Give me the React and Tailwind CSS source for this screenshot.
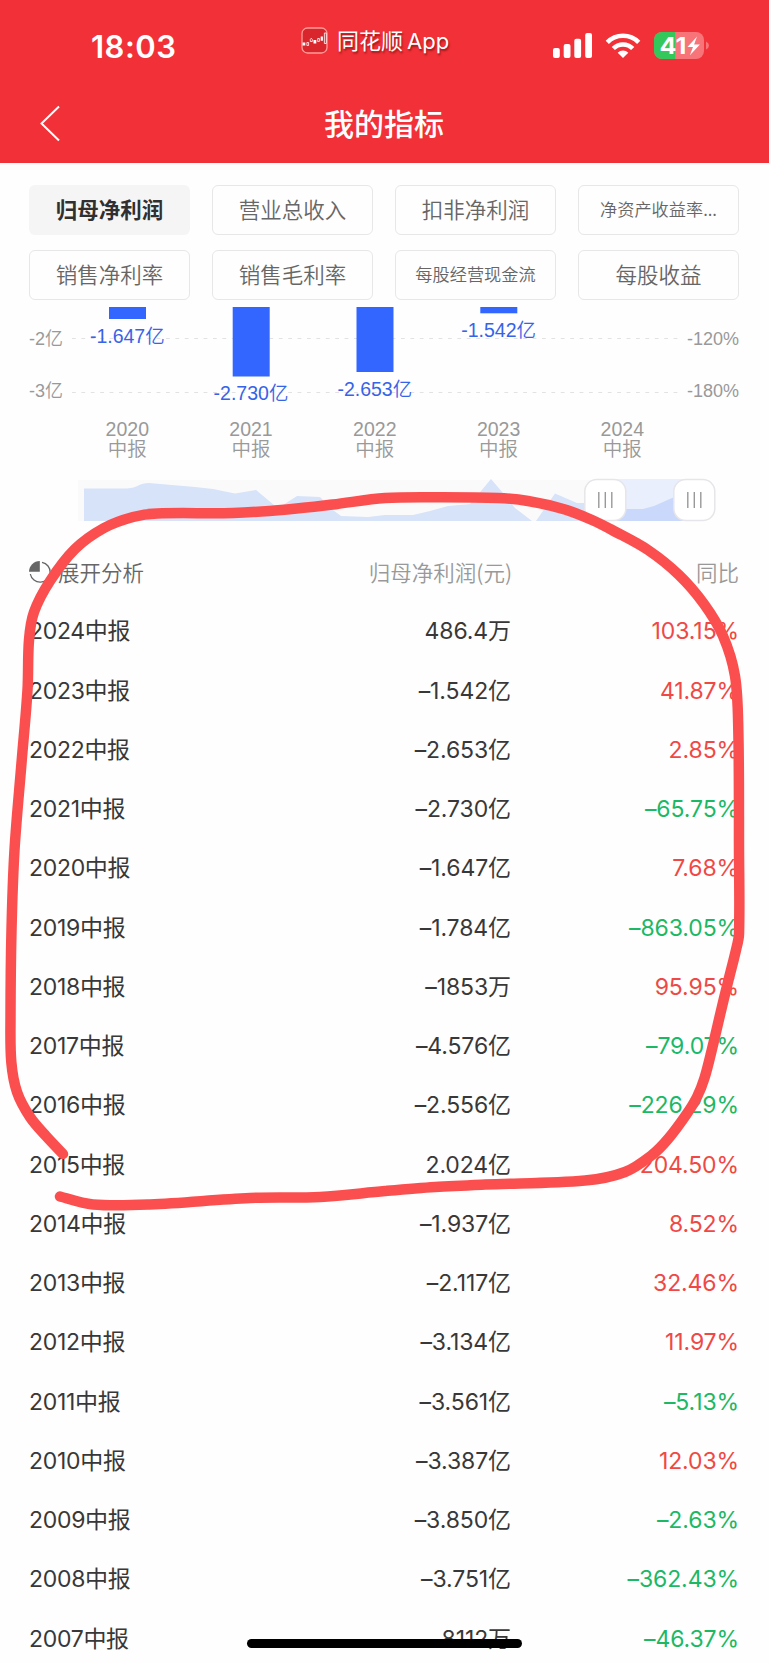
import React from "react";

const INDICATORS = [
  { label: "归母净利润", active: true },
  { label: "营业总收入" },
  { label: "扣非净利润" },
  { label: "净资产收益率...", small: true },
  { label: "销售净利率" },
  { label: "销售毛利率" },
  { label: "每股经营现金流", small: true },
  { label: "每股收益" },
];

const BARS = [
  { x: 109, bottom: 319, year: "2020", value: "-1.647亿", labelY: 342.5 },
  { x: 232.7, bottom: 376.5, year: "2021", value: "-2.730亿", labelY: 400 },
  { x: 356.5, bottom: 372, year: "2022", value: "-2.653亿", labelY: 396 },
  { x: 480.3, bottom: 313.3, year: "2023", value: "-1.542亿", labelY: 337 },
  { x: 604, year: "2024" },
];

const ROWS = [
  ["2024中报", "486.4万", "103.15%"],
  ["2023中报", "–1.542亿", "41.87%"],
  ["2022中报", "–2.653亿", "2.85%"],
  ["2021中报", "–2.730亿", "–65.75%"],
  ["2020中报", "–1.647亿", "7.68%"],
  ["2019中报", "–1.784亿", "–863.05%"],
  ["2018中报", "–1853万", "95.95%"],
  ["2017中报", "–4.576亿", "–79.07%"],
  ["2016中报", "–2.556亿", "–226.29%"],
  ["2015中报", "2.024亿", "204.50%"],
  ["2014中报", "–1.937亿", "8.52%"],
  ["2013中报", "–2.117亿", "32.46%"],
  ["2012中报", "–3.134亿", "11.97%"],
  ["2011中报", "–3.561亿", "–5.13%"],
  ["2010中报", "–3.387亿", "12.03%"],
  ["2009中报", "–3.850亿", "–2.63%"],
  ["2008中报", "–3.751亿", "–362.43%"],
  ["2007中报", "8112万", "–46.37%"],
];

const MARKER = [
  [63, 1154], [46, 1136], [30, 1117], [17, 1092], [11.3, 1062], [10.5, 1018],
  [11.5, 930], [14.5, 850], [21.5, 763], [27.5, 690], [29, 640], [34, 612],
  [50, 581], [75, 549], [104, 528], [133, 517], [157, 513.5], [233, 513],
  [287, 509.5], [333, 504.5], [385, 498], [440, 497.2], [498, 498], [528, 501],
  [565, 509.5], [592, 520], [613, 530.5], [648, 550], [679, 575], [704, 604],
  [723, 636], [735, 676], [738.3, 730], [739, 850], [739, 934], [736, 950],
  [728, 982], [720.500, 1013], [712.500, 1047], [704.500, 1078], [697, 1097],
  [686, 1115], [668, 1139], [652, 1155],
  [625, 1172], [585, 1180.5], [485, 1184.5], [435, 1187], [385, 1191],
  [320, 1197], [250, 1198], [150, 1204.5], [93, 1204.5], [60, 1196.5],
];

function smooth(points) {
  let d = `M${points[0][0]} ${points[0][1]}`;
  for (let i = 0; i < points.length - 1; i++) {
    const a = points[i - 1] || points[i];
    const b = points[i];
    const c = points[i + 1];
    const e = points[i + 2] || c;
    const len = Math.hypot(c[0] - b[0], c[1] - b[1]);
    const before = Math.hypot(b[0] - a[0], b[1] - a[1]) || len;
    const after = Math.hypot(e[0] - c[0], e[1] - c[1]) || len;
    const k1 = len / (len + before) / 3;
    const k2 = len / (len + after) / 3;
    d += ` C${b[0] + (c[0] - a[0]) * k1} ${b[1] + (c[1] - a[1]) * k1} ${c[0] - (e[0] - b[0]) * k2} ${c[1] - (e[1] - b[1]) * k2} ${c[0]} ${c[1]}`;
  }
  return d;
}

function AppBadge() {
  return (
    <svg className="size-[27px]" viewBox="0 0 27 27" fill="none">
      <rect x="1" y="1" width="25" height="25" rx="5.5" fill="#d9262c" stroke="#ff9c98" strokeWidth="1.3" />
      <path d="M1.500 15.500h2.800v3H1.500zM12.500 13h2.800v3.600h-2.800zM19.700 9.500h2.200v4.300h-2.200z" fill="#fff" />
      <path d="M5.900 15.500h1.700v3H5.900zM9.300 14.500v-2l1-1.300 1 1.300v2zM16.700 11.500h1.700v3h-1.700zM23.400 6h1.900v10.500h-1.900z" stroke="#fff" strokeWidth=".8" />
    </svg>
  );
}

function StatusBar() {
  return (
    <div className="flex h-[92px] w-full pl-[91px]">
      <div className="mt-[27px] w-[210px] font-[Inter] text-[31px] leading-[40px] font-semibold tracking-[0.5px]">18:03</div>
      <div className="mt-[26px] flex h-[28px] w-[251px] items-center gap-[9px]">
        <AppBadge />
        <span className="text-[22px] leading-[28px] whitespace-nowrap [text-shadow:1px_2px_2px_rgba(90,0,0,0.55)]">
          同花顺<span className="ml-[4px] font-[Inter] text-[22px]">App</span>
        </span>
      </div>
      <svg className="mt-[30px] h-[32px] w-[162px]" viewBox="552 30 162 32" fill="#fff">
        <rect x="553" y="48" width="6.800" height="10" rx="2" />
        <rect x="563.700" y="44" width="6.800" height="14" rx="2" />
        <rect x="574.300" y="38.800" width="6.800" height="19.200" rx="2" />
        <rect x="585.200" y="33" width="6.800" height="25" rx="2" />
        <g fill="none" stroke="#fff" strokeWidth="4.500">
          <path d="M607.300 42.300a22 22 0 0 1 31.400 0" />
          <path d="M613.300 48.500a13.600 13.600 0 0 1 19.400 0" />
        </g>
        <path d="M623 58l-5.300-5.300a7.500 7.500 0 0 1 10.600 0z" />
        <clipPath id="cell"><rect x="654" y="32" width="50" height="27" rx="8" /></clipPath>
        <g clipPath="url(#cell)">
          <rect x="654" y="32" width="50" height="27" fill="#f77478" />
          <rect x="654" y="32" width="21" height="27" fill="#34c759" />
        </g>
        <path d="M706 41.500q3 1.500 3 4t-3 4z" fill="#f77478" />
        <text x="659.500" y="54" fontFamily="Inter" fontSize="23.500" fontWeight="700" textLength="27" lengthAdjust="spacingAndGlyphs">41</text>
        <path d="M697 36.500l-9.500 10.600h5.500l-3.100 8.200 10-10.900h-5.800z" />
      </svg>
    </div>
  );
}

function NavBar() {
  return (
    <div className="flex h-[71px] items-start">
      <svg className="mt-[13px] ml-[38px] h-[38px] w-[24px]" viewBox="0 0 24 38" fill="none" stroke="#fff" strokeWidth="2">
        <path d="M21 1.500 3.500 18.500 21 35.500" />
      </svg>
      <h1 className="mt-[10px] flex-1 pr-[63px] text-center text-[30px] leading-[40px] font-medium">我的指标</h1>
    </div>
  );
}

function Chart() {
  return (
    <svg className="block h-[235px] w-[769px]" viewBox="0 300 769 235" fontFamily="'Liberation Sans','Noto Sans CJK SC',sans-serif">
      <g stroke="#e2e2e2" strokeWidth="1" strokeDasharray="3.800 5.600">
        <path d="M72 338.500H679M72 392.500H679" />
      </g>
      <g fill="#999" fontSize="18" fontWeight="350">
        <text x="29" y="344.500">-2亿</text>
        <text x="29" y="397.300">-3亿</text>
        <g textAnchor="end">
          <text x="739" y="344.500">-120%</text>
          <text x="739" y="397.200">-180%</text>
        </g>
      </g>
      {BARS.map((b) => (
        <g key={b.year} textAnchor="middle" fontWeight="350">
          {b.value && (
            <>
              <rect x={b.x} y="307" width="37" height={b.bottom - 307} fill="#3366ff" />
              <text x={b.x + 18.3} y={b.labelY} fontSize="19.500" fill="#3763e8">{b.value}</text>
            </>
          )}
          <g fill="#999" fontSize="19.500">
            <text x={b.x + 18.3} y="436">{b.year}</text>
            <text x={b.x + 18.3} y="456">中报</text>
          </g>
        </g>
      ))}
      <rect x="78" y="480" width="627" height="41" fill="#fbfafb" />
      <rect x="605" y="479" width="89" height="42" fill="#e9effc" />
      <path
        fill="#d7e3f9"
        d="M84 521V488.500H127C138 488 139 483 149 483L195 487 213 489 235 493.500 256 490 274 505H283L297 496 320 497 333 510 341 516 368 517 385 515 413 515 430 511 448 506 470 504 481 491 491 479 503 493 515 508 532 521ZM536 521 555 493.500 577 503 605 503V521Z"
      />
      <path fill="#cad9fb" d="M605 503 625 509 643 509 654 506 672 498 694 490V521H605Z" />
      {[605.3, 694.3].map((x) => (
        <g key={x}>
          <rect x={x - 20.5} y="479.500" width="41" height="41" rx="12" fill="#fff" stroke="#e6e6ea" strokeWidth="1.500" />
          <path d={`M${x - 6.5} 492V508M${x} 492V508M${x + 6.5} 492V508`} stroke="#999" strokeWidth="1.400" />
        </g>
      ))}
    </svg>
  );
}

function Table() {
  return (
    <div className="pr-[30px] pl-[29px]">
      <div className="grid h-[67px] grid-cols-[240px_243px_1fr] items-start pt-[19px] text-[21.5px] leading-[36px] font-[350] text-[#999]">
        <div className="flex items-center gap-[7px] text-[#666]">
          <svg className="size-[22px]" viewBox="0 0 22 22" fill="none">
            <path d="M13 1.300A10 10 0 1 1 1.300 13" stroke="#666" strokeWidth="1.300" />
            <path d="M10.800 0V10.800H0A10.800 10.800 0 0 1 10.800 0z" fill="#666" />
          </svg>
          <span>展开分析</span>
        </div>
        <div className="text-right">归母净利润(元)</div>
        <div className="text-right">同比</div>
      </div>
      {ROWS.map(([period, amount, change]) => (
        <div key={period} className="grid h-[59.26px] grid-cols-[240px_242px_1fr] items-center font-[Inter,'Noto_Sans_CJK_SC',sans-serif] text-[23px] tracking-[-0.3px] text-[#383838]">
          <div>{period}</div>
          <div className="text-right tracking-[-0.1px]">{amount}</div>
          <div className={change.startsWith("–") ? "text-right tracking-[-0.1px] text-[#1cb864]" : "text-right tracking-[-0.1px] text-[#f04845]"}>{change}</div>
        </div>
      ))}
    </div>
  );
}

export default function App() {
  return (
    <div className="relative h-[1663px] w-[769px] overflow-hidden bg-[#fefefe] font-['Noto_Sans_CJK_SC',sans-serif]">
      <header className="h-[163px] bg-[#f23037] text-white">
        <StatusBar />
        <NavBar />
      </header>
      <div className="grid h-[137px] grid-cols-4 gap-x-[22px] gap-y-[15px] pt-[22px] pr-[30px] pl-[29px]">
        {INDICATORS.map((item) => (
          <div
            key={item.label}
            className={
              "flex h-[50px] items-center justify-center whitespace-nowrap rounded-[6px] pb-[2px] " +
              (item.active ? "bg-[#f6f5f6] font-bold text-[#303030] " : "border-[1.5px] border-[#e8e7e8] font-[350] text-[#666] ") +
              (item.small ? "text-[17.2px]" : "text-[21.5px]")
            }
          >
            {item.label}
          </div>
        ))}
      </div>
      <Chart />
      <Table />
      <div className="absolute top-[1639px] left-[247px] h-[9px] w-[275px] rounded-full bg-black" />
      <svg className="pointer-events-none absolute inset-0 h-[1663px] w-[769px]" viewBox="0 0 769 1663" fill="none">
        <path d={smooth(MARKER)} stroke="#fb4f4f" strokeWidth="10.500" strokeLinecap="round" strokeLinejoin="round" />
      </svg>
    </div>
  );
}
